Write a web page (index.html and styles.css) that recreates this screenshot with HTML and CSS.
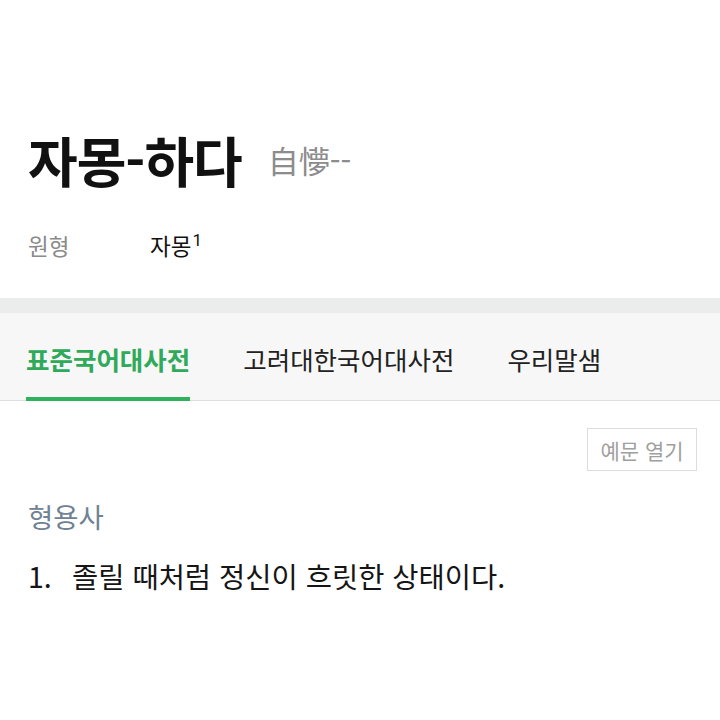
FILE: index.html
```html
<!DOCTYPE html>
<html lang="ko">
<head>
    <meta charset="UTF-8">
    <meta name="viewport" content="width=device-width, initial-scale=1.0">
    <title>자몽-하다</title>
    <link rel="stylesheet" href="styles.css">
</head>
<body>
    <header class="entry">
        <div class="entry-title">
            <h1>자몽-하다</h1>
            <span class="hanja">自懜--</span>
        </div>
        <div class="entry-origin">
            <span class="origin-label">원형</span>
            <span class="origin-word">자몽<sup>1</sup></span>
        </div>
    </header>

    <nav class="tabs">
        <a class="tab active">표준국어대사전</a>
        <a class="tab">고려대한국어대사전</a>
        <a class="tab">우리말샘</a>
    </nav>

    <main class="meaning">
        <div class="toolbar">
            <button class="example-btn">예문 열기</button>
        </div>
        <p class="pos">형용사</p>
        <p class="definition"><span class="num">1.</span>졸릴 때처럼 정신이 흐릿한 상태이다.</p>
    </main>
</body>
</html>
```

FILE: styles.css
```css
body {
    font-family: "Noto Sans CJK KR", "Noto Sans", sans-serif;
    margin: 0;
    padding: 0;
    background-color: #fff;
    color: #111;
}

.entry {
    padding: 130px 28px 0;
}

.entry-title {
    display: flex;
    align-items: center;
    height: 60px;
}

.entry-title h1 {
    margin: 0;
    font-size: 54px;
    font-weight: bold;
    letter-spacing: -1px;
    line-height: 60px;
}

.hanja {
    margin-left: 26px;
    font-size: 31px;
    color: #8c8c8c;
    line-height: 60px;
}

.entry-origin {
    display: flex;
    margin-top: 40px;
    font-size: 22.5px;
    line-height: 30px;
}

.origin-label {
    width: 122px;
    color: #8a8a8a;
}

.origin-word sup {
    font-family: Roboto, sans-serif;
    font-size: 17px;
    vertical-align: 0;
    position: relative;
    top: -9px;
    margin-left: 1px;
}

.tabs {
    display: flex;
    gap: 53px;
    margin-top: 34px;
    padding: 0 26px;
    height: 87px;
    background-color: #f7f7f7;
    border-top: 15px solid #ebeded;
    border-bottom: 1px solid #dedede;
}

.tab {
    padding-top: 33px;
    font-size: 25.5px;
    line-height: 26px;
    color: #222;
    border-bottom: 4px solid transparent;
    box-sizing: border-box;
    height: 88px;
}

.tab.active {
    color: #2fa95a;
    font-weight: bold;
    border-bottom-color: #2fb15e;
}

.meaning {
    padding: 0 23px 0 28px;
}

.toolbar {
    display: flex;
    justify-content: flex-end;
    margin-top: 27px;
}

.example-btn {
    width: 110px;
    height: 43px;
    font-family: inherit;
    font-size: 21px;
    color: #a0a0a0;
    background: #fff;
    border: 1px solid #dcdcdc;
    padding: 0;
}

.pos {
    margin: 30px 0 0;
    font-size: 27.5px;
    line-height: 30px;
    color: #6f8293;
}

.definition {
    margin: 30px 0 0;
    font-size: 28.5px;
    line-height: 30px;
    color: #151515;
}

.definition .num {
    display: inline-block;
    width: 44px;
}
```
